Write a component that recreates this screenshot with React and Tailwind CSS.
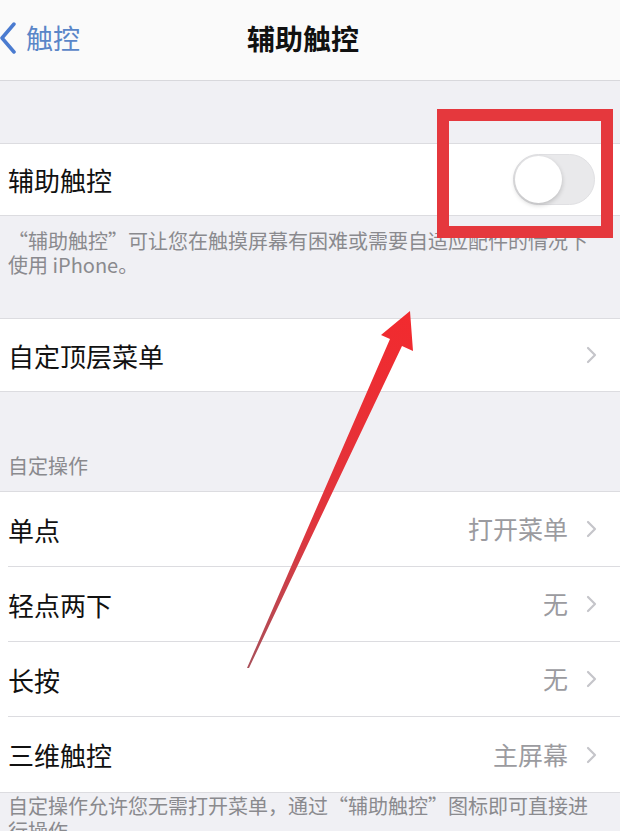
import React from "react";

const font = { fontFamily: '"Noto Sans CJK SC", "Noto Sans", sans-serif' };

function Chevron() {
  return (
    <svg width="11" height="18" viewBox="0 0 11 18" className="shrink-0">
      <path d="M2 2 L9 9 L2 16" fill="none" stroke="#c5c5ca" strokeWidth="2.2" strokeLinecap="round" strokeLinejoin="round" />
    </svg>
  );
}

function Row({ label, value, last }) {
  return (
    <div className="bg-white pl-[8px]">
      <div className={`h-[75px] flex items-center pr-[23px] ${last ? "" : "border-b border-[#dcdce0]"}`}>
        <span className="flex-1 text-[26px] text-[#111]">{label}</span>
        {value && <span className="text-[25px] text-[#9b9b9f] mr-[18px]">{value}</span>}
        <Chevron />
      </div>
    </div>
  );
}

export default function App() {
  return (
    <div className="relative w-[620px] h-[831px] overflow-hidden bg-[#f0f0f4]" style={font}>
      {/* nav bar */}
      <div className="h-[81px] bg-[#fafafa] border-b border-[#d8d8dc] flex items-center relative">
        <div className="flex items-center gap-[10px] text-[#5a86c8] text-[27px] pb-[4px]">
          <svg width="16" height="32" viewBox="0 0 16 32">
            <path d="M14 2 L2 16 L14 30" fill="none" stroke="#4a7bd0" strokeWidth="3.5" strokeLinecap="round" strokeLinejoin="round" />
          </svg>
          <span>触控</span>
        </div>
        <div className="absolute inset-0 flex items-center justify-center pr-[14px] pb-[4px] text-[28px] font-bold text-[#111]">
          辅助触控
        </div>
      </div>

      <div className="h-[62px]" />

      {/* toggle row */}
      <div className="bg-white border-y border-[#dcdce0] h-[73px] flex items-center pl-[8px] pr-[25px]">
        <span className="flex-1 text-[26px] text-[#111]">辅助触控</span>
        <div className="w-[82px] h-[51px] rounded-full bg-[#e9e9eb] border border-[#e0e0e3] relative">
          <div className="absolute left-[1px] top-[1px] w-[47px] h-[47px] rounded-full bg-white shadow-[0_2px_5px_rgba(0,0,0,0.2)]" />
        </div>
      </div>

      <div className="pl-[8px] pt-[13px] pb-[41px] text-[20px] leading-[24px] text-[#8a8a8e] whitespace-nowrap">
        <div>“辅助触控”可让您在触摸屏幕有困难或需要自适应配件的情况下</div>
        <div>使用 iPhone。</div>
      </div>

      <div className="border-y border-[#dcdce0]">
        <div className="bg-white h-[72px] flex items-center pl-[8px] pr-[23px]">
          <span className="flex-1 text-[26px] text-[#111]">自定顶层菜单</span>
          <Chevron />
        </div>
      </div>

      <div className="pl-[8px] pt-[62px] pb-[13px] text-[20px] leading-[24px] text-[#8a8a8e]">自定操作</div>

      <div className="border-y border-[#dcdce0]">
        <Row label="单点" value="打开菜单" />
        <Row label="轻点两下" value="无" />
        <Row label="长按" value="无" />
        <Row label="三维触控" value="主屏幕" last />
      </div>

      <div className="pl-[8px] text-[20px] leading-[25px] text-[#8a8a8e] whitespace-nowrap">
        <div>自定操作允许您无需打开菜单，通过“辅助触控”图标即可直接进</div>
        <div>行操作。</div>
      </div>

      {/* red highlight box */}
      <div className="absolute left-[437px] top-[109px] w-[176px] h-[129px] border-[12px] border-[#e5383d]" />

      {/* red arrow */}
      <svg className="absolute left-0 top-0 pointer-events-none" width="620" height="831" viewBox="0 0 620 831">
        <defs>
          <linearGradient id="ar" x1="410" y1="311" x2="248" y2="668" gradientUnits="userSpaceOnUse">
            <stop offset="0" stopColor="#f22a2e" />
            <stop offset="0.6" stopColor="#e0353d" />
            <stop offset="1" stopColor="#a9505a" />
          </linearGradient>
        </defs>
        <polygon points="410,311 413,351 402,346 249,668 247,668 390,339 381,335" fill="url(#ar)" />
      </svg>
    </div>
  );
}
